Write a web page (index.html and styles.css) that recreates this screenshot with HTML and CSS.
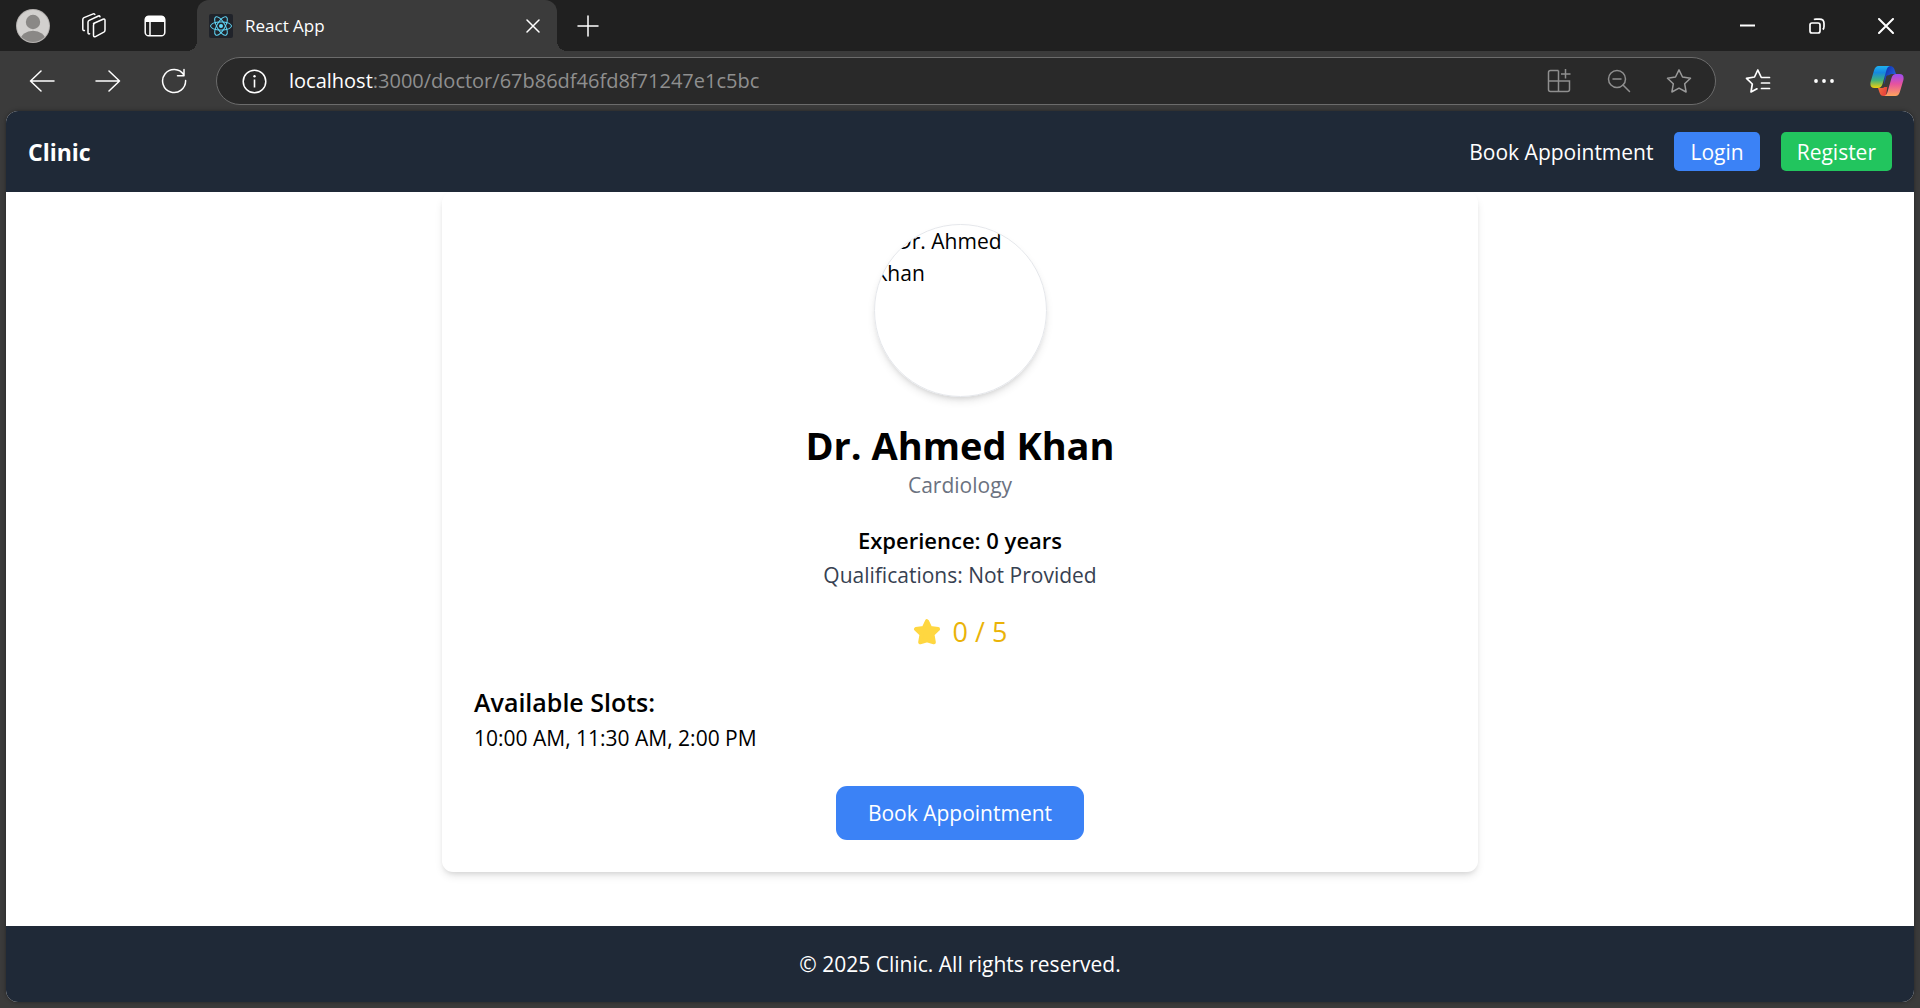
FILE: index.html
```html
<!DOCTYPE html>
<html lang="en">
<head>
<meta charset="utf-8">
<meta name="viewport" content="width=device-width, initial-scale=1">
<title>React App</title>
<link rel="stylesheet" href="styles.css">
</head>
<body>
<div class="browser">
  <div class="titlebar">
    <button class="title-btn" aria-label="Profile">
      <svg width="34" height="34" viewBox="0 0 34 34"><defs><clipPath id="face"><circle cx="17" cy="17" r="16"/></clipPath></defs><circle cx="17" cy="17" r="17" fill="#b5b2b0"/><circle cx="17" cy="17" r="16" fill="#d2d0ce"/><g clip-path="url(#face)" fill="#8a8886"><circle cx="17" cy="13" r="7.2"/><ellipse cx="17" cy="31" rx="12.5" ry="9.3"/></g></svg>
    </button>
    <button class="title-btn" aria-label="Workspaces">
      <svg width="26" height="26" viewBox="0 0 26 26" fill="none" stroke="#fff" stroke-width="1.5" stroke-linejoin="round" stroke-linecap="round"><path d="M12.5 10.5 L22 6.2 Q24 5.4 24 7.5 V17 Q24 18.5 22.8 19.2 L14.5 23.6 Q12.5 24.5 12.5 22.3 V12.3 Q12.5 11 13.5 10.2"/><path d="M8.6 20.8 Q7 21.3 7 19.3 V9.2 Q7 8 8.2 7.4 L17.4 3 Q18.6 2.6 19 3.7"/><path d="M3.4 17.6 Q1.8 17.7 1.8 16 V6.5 Q1.8 5.2 3 4.6 L12.2 .9 Q13.2 .6 13.8 1.4"/></svg>
    </button>
    <button class="title-btn" aria-label="Tab actions">
      <svg width="22" height="22" viewBox="0 0 22 22"><rect x="1.2" y="1.2" width="19.6" height="19.6" rx="3.6" fill="none" stroke="#fff" stroke-width="1.5"/><path d="M1 7V4.5Q1 1 4.5 1H17.500Q21 1 21 4.500V7Z" fill="#fff"/><path d="M6 7V21" stroke="#fff" stroke-width="1.500"/></svg>
    </button>
    <div class="tab">
      <svg width="24" height="24" viewBox="0 0 24 24"><rect width="24" height="24" rx="2" fill="#20232a"/><g fill="none" stroke="#61dafb" stroke-width="1"><ellipse cx="12" cy="12" rx="10.5" ry="4.100"/><ellipse cx="12" cy="12" rx="10.500" ry="4.100" transform="rotate(60 12 12)"/><ellipse cx="12" cy="12" rx="10.500" ry="4.100" transform="rotate(120 12 12)"/></g><circle cx="12" cy="12" r="2" fill="#61dafb"/></svg>
      <span class="tab-title">React App</span>
      <button class="tab-close" aria-label="Close tab"><svg width="14" height="14" viewBox="0 0 14 14" stroke="#fff" stroke-width="1.5" stroke-linecap="round"><path d="M1 1L13 13M13 1L1 13"/></svg></button>
    </div>
    <button class="title-btn" aria-label="New tab"><svg width="22" height="22" viewBox="0 0 22 22" stroke="#fff" stroke-width="1.5" stroke-linecap="round"><path d="M11 1V21M1 11H21"/></svg></button>
    <div class="window-controls">
      <button class="window-btn" aria-label="Minimize"><svg width="16" height="16" viewBox="0 0 16 16"><path d="M0 7.500H15" stroke="#fff" stroke-width="2"/></svg></button>
      <button class="window-btn" aria-label="Restore"><svg width="16" height="16" viewBox="0 0 16 16" fill="none" stroke="#fff" stroke-width="1.700"><rect x="1" y="5" width="10" height="10" rx="2"/><path d="M5 1.700Q5.500 1.200 7 1.200H10.500Q15 1.200 15 5.500V8.500Q15 10.500 13.800 11.500"/></svg></button>
      <button class="window-btn" aria-label="Close"><svg width="16" height="16" viewBox="0 0 16 16" stroke="#fff" stroke-width="2" stroke-linecap="round"><path d="M1 1L15 15M15 1L1 15"/></svg></button>
    </div>
  </div>
  <div class="toolbar">
    <button class="tool-btn" aria-label="Back"><svg width="26" height="22" viewBox="0 0 26 22" fill="none" stroke="#fff" stroke-width="1.500" stroke-linecap="round" stroke-linejoin="round"><path d="M25 11H1.500M12 1L1.500 11L12 21"/></svg></button>
    <button class="tool-btn" aria-label="Forward"><svg width="26" height="22" viewBox="0 0 26 22" fill="none" stroke="#fff" stroke-width="1.500" stroke-linecap="round" stroke-linejoin="round"><path d="M1 11H24.500M14 1L24.500 11L14 21"/></svg></button>
    <button class="tool-btn" aria-label="Refresh"><svg width="26" height="26" viewBox="0 0 26 26" fill="none" stroke="#fff" stroke-width="1.500" stroke-linecap="round" stroke-linejoin="round"><path d="M24.600 12.500A11.500 11.500 0 1 1 22.800 6.800M23 1.500V7.800H16.500"/></svg></button>
    <div class="address">
      <svg width="25" height="25" viewBox="0 0 25 25"><circle cx="12.500" cy="12.500" r="11.300" fill="none" stroke="#fff" stroke-width="1.500"/><path d="M12.500 10.500V18.500" stroke="#fff" stroke-width="1.600"/><circle cx="12.500" cy="7.300" r="1.200" fill="#fff"/></svg>
      <div class="url">
        <label for="url">localhost</label>
        <input id="url" type="text" value=":3000/doctor/67b86df46fd8f71247e1c5bc" spellcheck="false">
      </div>
      <button class="address-btn" aria-label="Apps"><svg width="24" height="24" viewBox="0 0 24 24" fill="none" stroke="#8f8f8f" stroke-width="1.500"><path d="M11.500 1.500H3.500Q1.500 1.500 1.500 3.500V20.500Q1.500 22.500 3.500 22.500H20.500Q22.500 22.500 22.500 20.500V12H1.500M11.500 1.500V22.500M18.500 0V9.500M14 5H23.500"/></svg></button>
      <button class="address-btn" aria-label="Zoom out"><svg width="24" height="24" viewBox="0 0 24 24" fill="none" stroke="#8f8f8f" stroke-width="1.500" stroke-linecap="round"><circle cx="10" cy="10" r="8.500"/><path d="M6 10H14M16 16L22.500 22.500"/></svg></button>
      <button class="address-btn" aria-label="Add to favorites"><svg width="26" height="26" viewBox="0 0 26 26" fill="none" stroke="#9a9a9a" stroke-width="1.500" stroke-linejoin="round"><path d="M13 1.800L16.500 9L24.500 10.200L18.700 15.800L20.100 24L13 20.200L5.900 24L7.300 15.800L1.500 10.200L9.500 9Z"/></svg></button>
    </div>
    <button class="tool-btn" aria-label="Favorites"><svg width="26" height="26" viewBox="0 0 26 26" fill="none" stroke="#fff" stroke-width="1.700" stroke-linejoin="round" stroke-linecap="round"><path d="M24.500 9.500H16.300L12.800 2L9.500 9L1.500 10.300L7.300 16L6 24L12 20.800M16.500 15H24.500M16.500 20.500H24.500"/></svg></button>
    <button class="tool-btn" aria-label="Settings and more"><svg width="20" height="6" viewBox="0 0 20 6" fill="#fff"><circle cx="2" cy="3" r="1.900"/><circle cx="10" cy="3" r="1.900"/><circle cx="18" cy="3" r="1.900"/></svg></button>
    <button class="tool-btn copilot" aria-label="Copilot">
      <svg width="34" height="32" viewBox="0 0 34 32">
        <defs>
          <linearGradient id="cool" x1="0" y1="0" x2="0" y2="1"><stop offset="0" stop-color="#1fb1ef"/><stop offset=".3" stop-color="#1688e0"/><stop offset=".65" stop-color="#42b17a"/><stop offset="1" stop-color="#f3cf0b"/></linearGradient>
          <linearGradient id="deep" x1="0" y1="0" x2="1" y2="1"><stop offset="0" stop-color="#1028a8"/><stop offset="1" stop-color="#2c7cf0"/></linearGradient>
          <linearGradient id="warm" x1="0" y1="0" x2="0" y2="1"><stop offset="0" stop-color="#9b4cf3"/><stop offset=".45" stop-color="#e6529f"/><stop offset="1" stop-color="#ffa45c"/></linearGradient>
          <linearGradient id="red" x1="0" y1="0" x2="1" y2="1"><stop offset="0" stop-color="#ff8a3c"/><stop offset="1" stop-color="#e02f3c"/></linearGradient>
        </defs>
        <path d="M15 1H20Q23.500 1 24.500 4.500L26 9H22Q19 9 18 12L14 22Z" fill="url(#deep)"/>
        <path d="M19 10L16 31H13.500Q10.500 31 9.500 27.500L8 23H12Q15 23 16 19Z" fill="url(#red)"/>
        <path d="M20.500 10.500L17.500 22H13.300L16.300 11.500Q17 9.500 20.500 10.500Z" fill="#3b3b3b"/>
        <path d="M8.500 1H20Q17.500 1.500 16.500 5L12.500 19Q11.300 23 8 23H4.500Q-.5 23 .6 17L4 5.500Q5.300 1 8.500 1Z" fill="url(#cool)"/>
        <path d="M25.500 31H14Q16.500 30.500 17.500 27L21.500 13Q22.700 9 26 9H29.500Q34.500 9 33.400 15L30 26.500Q28.700 31 25.500 31Z" fill="url(#warm)"/>
      </svg>
    </button>
  </div>
  <div class="page">
    <nav class="nav">
      <a class="brand" href="#">Clinic</a>
      <div class="nav-links">
        <a class="nav-link" href="#">Book Appointment</a>
        <a class="nav-link pill login" href="#">Login</a>
        <a class="nav-link pill register" href="#">Register</a>
      </div>
    </nav>
    <main class="main">
      <section class="card">
        <div class="avatar">Dr. Ahmed Khan</div>
        <h1 class="name">Dr. Ahmed Khan</h1>
        <p class="specialty">Cardiology</p>
        <p class="experience">Experience: 0 years</p>
        <p class="qualifications">Qualifications: Not Provided</p>
        <p class="rating">
          <svg width="28" height="26" viewBox="0 0 28 26"><path d="M14 2.200L17.300 9L25 10.100L19.500 15.400L20.800 23.200L14 21.300L7.200 23.200L8.500 15.400L3 10.100L10.700 9Z" fill="#ffd740" stroke="#ffd740" stroke-width="4" stroke-linejoin="round"/></svg>
          <span>0 / 5</span>
        </p>
        <div class="slots">
          <h2 class="slots-title">Available Slots:</h2>
          <p>10:00 AM, 11:30 AM, 2:00 PM</p>
        </div>
        <button class="book">Book Appointment</button>
      </section>
    </main>
    <footer class="footer">© 2025 Clinic. All rights reserved.</footer>
  </div>
</div>
</body>
</html>
```
FILE: styles.css
```css
* { box-sizing: border-box; margin: 0; padding: 0; }

body {
  font-family: "Segoe UI", "Open Sans", "Noto Sans", sans-serif;
  font-size: 20px;
  line-height: 32px;
  color: #000;
  background: #3b3b3b;
}

button, input { font: inherit; color: inherit; border: 0; background: none; }
a { color: inherit; text-decoration: none; }
svg { display: block; flex: none; }

.browser { display: flex; flex-direction: column; min-height: 100vh; }

/* Tab strip */
.titlebar { display: flex; height: 51px; padding-left: 2px; background: #202020; }
.title-btn, .window-btn, .tool-btn, .address-btn, .tab-close { display: flex; align-items: center; justify-content: center; }
.title-btn { width: 61px; }

.tab {
  position: relative;
  display: flex;
  align-items: center;
  gap: 12px;
  width: 360px;
  margin-left: 12px;
  padding: 0 16px 0 12px;
  border-radius: 12px 12px 0 0;
  background: #3b3b3b;
  color: #fff;
  font-size: 17px;
}
.tab::before, .tab::after {
  content: "";
  position: absolute;
  bottom: 0;
  width: 10px;
  height: 10px;
}
.tab::before { right: 100%; background: radial-gradient(circle at 0 0, transparent 10px, #3b3b3b 10px); }
.tab::after { left: 100%; background: radial-gradient(circle at 100% 0, transparent 10px, #3b3b3b 10px); }
.tab-title { flex: 1; }
.tab-close { width: 16px; }

.window-controls { display: flex; margin-left: auto; }
.window-btn { width: 69px; }

/* Toolbar */
.toolbar { display: flex; align-items: center; height: 60px; padding: 0 3px 0 9px; }
.tool-btn { width: 66px; height: 48px; }
.copilot { width: 60px; }

.address {
  flex: 1;
  display: flex;
  align-items: center;
  height: 48px;
  margin: 0 9px;
  padding: 0 6px 0 25px;
  border: 1px solid #6b6b6b;
  border-radius: 24px;
  background: #292929;
}
.url { flex: 1; display: flex; margin-left: 22px; color: #fff; }
.url input { flex: 1; color: #8f8f8f; outline: 0; }
.address-btn { width: 60px; height: 46px; }

/* Page */
.page {
  flex: 1;
  display: flex;
  flex-direction: column;
  margin: 0 6px 6px;
  border-radius: 12px;
  overflow: hidden;
  background: #fff;
  font-size: 21px;
  box-shadow: 0 0 4px rgba(0, 0, 0, 0.4);
}

.nav {
  position: relative;
  display: flex;
  align-items: center;
  justify-content: space-between;
  height: 81px;
  padding: 0 22px;
  background: #1f2937;
  color: #fff;
}
.brand { font-size: 23px; font-weight: 700; }
.nav-links { display: flex; align-items: center; gap: 21px; }
.pill { padding: 4px 16px 3px; border-radius: 5px; }
.login { background: #3b82f6; }
.register { background: #22c55e; }

.main { flex: 1; padding: 0 32px 54px; }

.card {
  display: flex;
  flex-direction: column;
  align-items: center;
  max-width: 1036px;
  margin: 0 auto;
  padding: 32px;
  border-radius: 11px;
  text-align: center;
  box-shadow: 0 5px 8px -1px rgba(0, 0, 0, 0.1), 0 3px 5px -2px rgba(0, 0, 0, 0.1);
}

.avatar {
  width: 173px;
  height: 173px;
  margin-bottom: 24px;
  border: 1px solid #e5e7eb;
  border-radius: 50%;
  overflow: hidden;
  text-align: left;
  text-indent: 22px;
  box-shadow: 0 5px 8px -1px rgba(0, 0, 0, 0.1), 0 3px 5px -2px rgba(0, 0, 0, 0.1);
}

.name { font-size: 38px; line-height: 48px; font-weight: 700; }
.specialty { color: #6b7280; }
.experience { margin-top: 20px; font-size: 22px; line-height: 38px; font-weight: 600; }
.qualifications { color: #374151; }
.rating {
  display: flex;
  align-items: center;
  gap: 12px;
  margin-top: 22px;
  font-size: 27px;
  line-height: 38px;
  color: #eab308;
}
.slots { align-self: stretch; margin-top: 32px; text-align: left; }
.slots-title { font-size: 25px; line-height: 39px; font-weight: 600; }

.book {
  margin-top: 32px;
  padding: 11px 32px;
  border-radius: 11px;
  background: #3b82f6;
  color: #fff;
}

.footer { padding: 22px; background: #1f2937; color: #fff; text-align: center; }
```
